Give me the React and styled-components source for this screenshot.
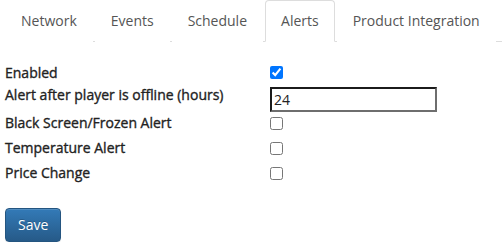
import React, { useState } from "react";
import styled, { createGlobalStyle } from "styled-components";

const Global = createGlobalStyle`
  html, body { margin: 0; padding: 0; background: #fff; }
  body {
    font-family: "Open Sans", "Noto Sans", sans-serif;
    font-size: 14px;
    line-height: 20px;
    color: #333;
  }
  * { box-sizing: border-box; }
`;

const Page = styled.div`
  padding: 0 0 0 5px;
`;

const Tabs = styled.ul`
  display: flex;
  list-style: none;
  margin: 0;
  padding: 0;
  border-bottom: 1px solid #ddd;
`;

const Tab = styled.li`
  margin-bottom: -1px;
  margin-right: 2px;
`;

const TabLink = styled.a`
  display: block;
  padding: 10px 15px;
  line-height: 20px;
  color: #555;
  text-decoration: none;
  border: 1px solid ${(p) => (p.$active ? "#ddd" : "transparent")};
  border-bottom-color: transparent;
  border-radius: 4px 4px 0 0;
  background: #fff;
  cursor: pointer;
`;

const Form = styled.div`
  margin-top: 18px;
  display: grid;
  grid-template-columns: 265px 1fr;
  grid-auto-rows: 25px;
`;

const Label = styled.label`
  font-weight: 400;
  color: #222;
  -webkit-text-stroke: 0.35px #222;
  line-height: 20px;
  padding-top: ${(p) => (p.$top ? "0" : "2.5px")};
`;

const Field = styled.div`
  display: flex;
  align-items: flex-start;
`;

const Check = styled.input.attrs({ type: "checkbox" })`
  width: 13px;
  height: 13px;
  margin: ${(p) => (p.$first ? "6px" : "7px")} 0 0 0;
`;

const TextInput = styled.input.attrs({ type: "text" })`
  width: 167px;
  height: 25px;
  margin: 2px 0 0 0;
  padding: 1px 2px;
  border: 2px solid;
  border-color: #1b1b1b #6e6e6e #6e6e6e #1b1b1b;
  font-family: "Open Sans", "Noto Sans", sans-serif;
  font-size: 14px;
  color: #222;
  background: #fff;
  outline: none;
`;

const SaveButton = styled.button`
  margin-top: 23px;
  display: inline-block;
  height: 34px;
  padding: 6px 12px;
  font-family: "Open Sans", "Noto Sans", sans-serif;
  font-size: 14px;
  line-height: 20px;
  color: #fff;
  background-image: linear-gradient(to bottom, #337ab7 0, #265a88 100%);
  border: 1px solid #245580;
  border-radius: 4px;
  text-shadow: 0 -1px 0 rgba(0, 0, 0, 0.2);
  box-shadow: inset 0 1px 0 rgba(255, 255, 255, 0.15), 0 1px 1px rgba(0, 0, 0, 0.075);
  cursor: pointer;
`;

const tabs = ["Network", "Events", "Schedule", "Alerts", "Product Integration"];

export default function App() {
  const [active, setActive] = useState("Alerts");
  const [enabled, setEnabled] = useState(true);
  const [hours, setHours] = useState("24");
  const [black, setBlack] = useState(false);
  const [temp, setTemp] = useState(false);
  const [price, setPrice] = useState(false);

  return (
    <Page>
      <Global />
      <Tabs>
        {tabs.map((t) => (
          <Tab key={t}>
            <TabLink $active={t === active} onClick={() => setActive(t)}>
              {t}
            </TabLink>
          </Tab>
        ))}
      </Tabs>
      <Form>
        <Label>Enabled</Label>
        <Field>
          <Check $first checked={enabled} onChange={(e) => setEnabled(e.target.checked)} />
        </Field>
        <Label $top>Alert after player is offline (hours)</Label>
        <Field>
          <TextInput value={hours} onChange={(e) => setHours(e.target.value)} />
        </Field>
        <Label>Black Screen/Frozen Alert</Label>
        <Field>
          <Check checked={black} onChange={(e) => setBlack(e.target.checked)} />
        </Field>
        <Label>Temperature Alert</Label>
        <Field>
          <Check checked={temp} onChange={(e) => setTemp(e.target.checked)} />
        </Field>
        <Label>Price Change</Label>
        <Field>
          <Check checked={price} onChange={(e) => setPrice(e.target.checked)} />
        </Field>
      </Form>
      <SaveButton>Save</SaveButton>
    </Page>
  );
}
